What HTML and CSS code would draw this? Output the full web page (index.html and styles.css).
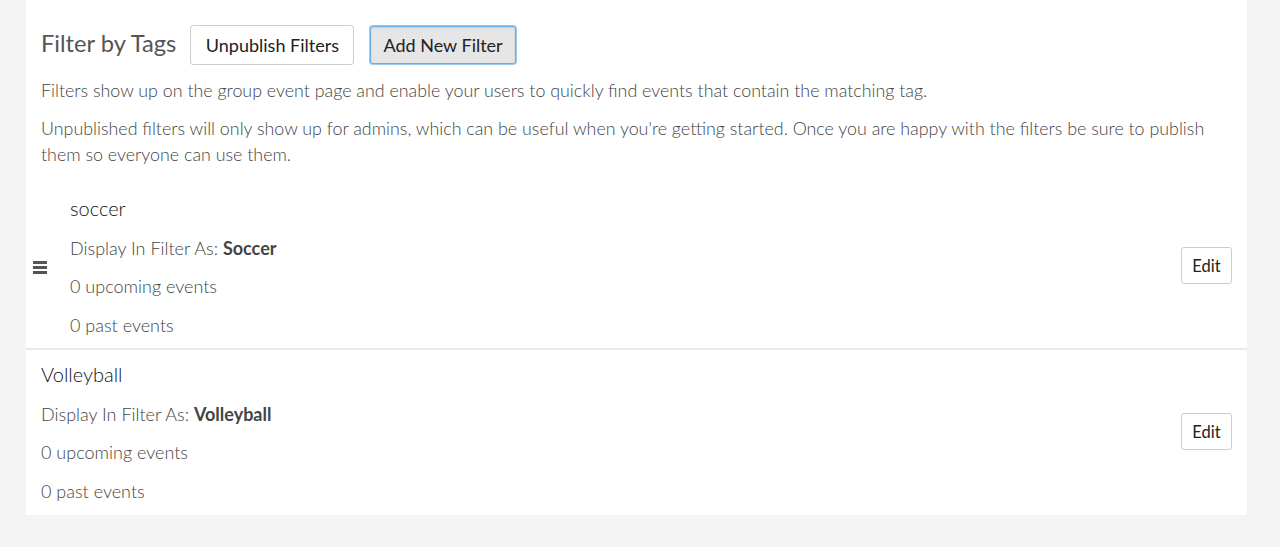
FILE: index.html
```html
<!DOCTYPE html>
<html>
<head>
<meta charset="utf-8">
<link rel="stylesheet" href="styles.css">
</head>
<body>
<div class="panel">
  <div class="header">
    <h2 class="title">Filter by Tags</h2>
    <button class="btn">Unpublish Filters</button>
    <button class="btn btn-active">Add New Filter</button>
  </div>
  <p class="desc">Filters show up on the group event page and enable your users to quickly find events that contain the matching tag.</p>
  <p class="desc desc-2">Unpublished filters will only show up for admins, which can be useful when you're getting started. Once you are happy with the filters be sure to publish them so everyone can use them.</p>
  <div class="list">
    <div class="item item-drag">
      <div class="handle"><span></span><span></span><span></span></div>
      <div class="info">
        <div class="name">soccer</div>
        <div class="line">Display In Filter As: <b>Soccer</b></div>
        <div class="line">0 upcoming events</div>
        <div class="line">0 past events</div>
      </div>
      <button class="btn btn-edit">Edit</button>
    </div>
    <div class="item">
      <div class="info">
        <div class="name">Volleyball</div>
        <div class="line">Display In Filter As: <b>Volleyball</b></div>
        <div class="line">0 upcoming events</div>
        <div class="line">0 past events</div>
      </div>
      <button class="btn btn-edit">Edit</button>
    </div>
  </div>
</div>
</body>
</html>
```
FILE: styles.css
```css
html, body {
  margin: 0;
  padding: 0;
  background: #f4f4f4;
  font-family: Lato, "Open Sans", sans-serif;
}
.panel {
  margin: 0 33px 0 26px;
  background: #fff;
  padding-top: 25px;
  padding-bottom: 1px;
}
.header {
  display: flex;
  align-items: center;
  padding: 0 15px;
  height: 40px;
}
.title {
  margin: 0 14px 0 0;
  font-size: 23.7px;
  line-height: 36px;
  font-weight: 400;
  color: #555;
  position: relative;
  top: -2px;
}
.btn {
  font-family: Lato, sans-serif;
  font-size: 18px;
  font-weight: 400;
  color: #222;
  background: #fff;
  border: 1px solid #ccc;
  border-radius: 3px;
  height: 40px;
  padding: 0 14.5px;
  margin-right: 16px;
}
.btn-active {
  background: #e6e6e6;
  border-color: #66afe9;
  box-shadow: 0 0 0 1px #9ecaed, inset 0 1px 2px rgba(0,0,0,0.12);
  height: 38px;
  padding: 0 12px;
}
.desc {
  margin: 12px 0 0;
  padding: 0 15px;
  font-size: 17.85px;
  font-weight: 300;
  line-height: 26px;
  color: #444;
}
.list {
  margin-top: 17px;
}
.item {
  display: flex;
  align-items: center;
  padding: 10px 15px 10.5px 15px;
}
.item-drag {
  padding-left: 7px;
  border-bottom: 2px solid #e9e9e9;
}
.handle {
  width: 37px;
  display: flex;
  flex-direction: column;
  gap: 2px;
  padding-top: 4px;
}
.handle span {
  display: block;
  width: 14px;
  height: 3px;
  background: #555;
}
.info {
  flex: 1;
}
.name {
  font-size: 20px;
  font-weight: 300;
  line-height: 28px;
  color: #111;
}
.line {
  margin-top: 12.5px;
  font-size: 18px;
  font-weight: 300;
  line-height: 26px;
  color: #444;
}
.line b {
  font-weight: 700;
  color: #444;
}
.btn-edit {
  font-size: 16.5px;
  height: 37px;
  width: 51px;
  padding: 0;
  margin: 0;
}
```
